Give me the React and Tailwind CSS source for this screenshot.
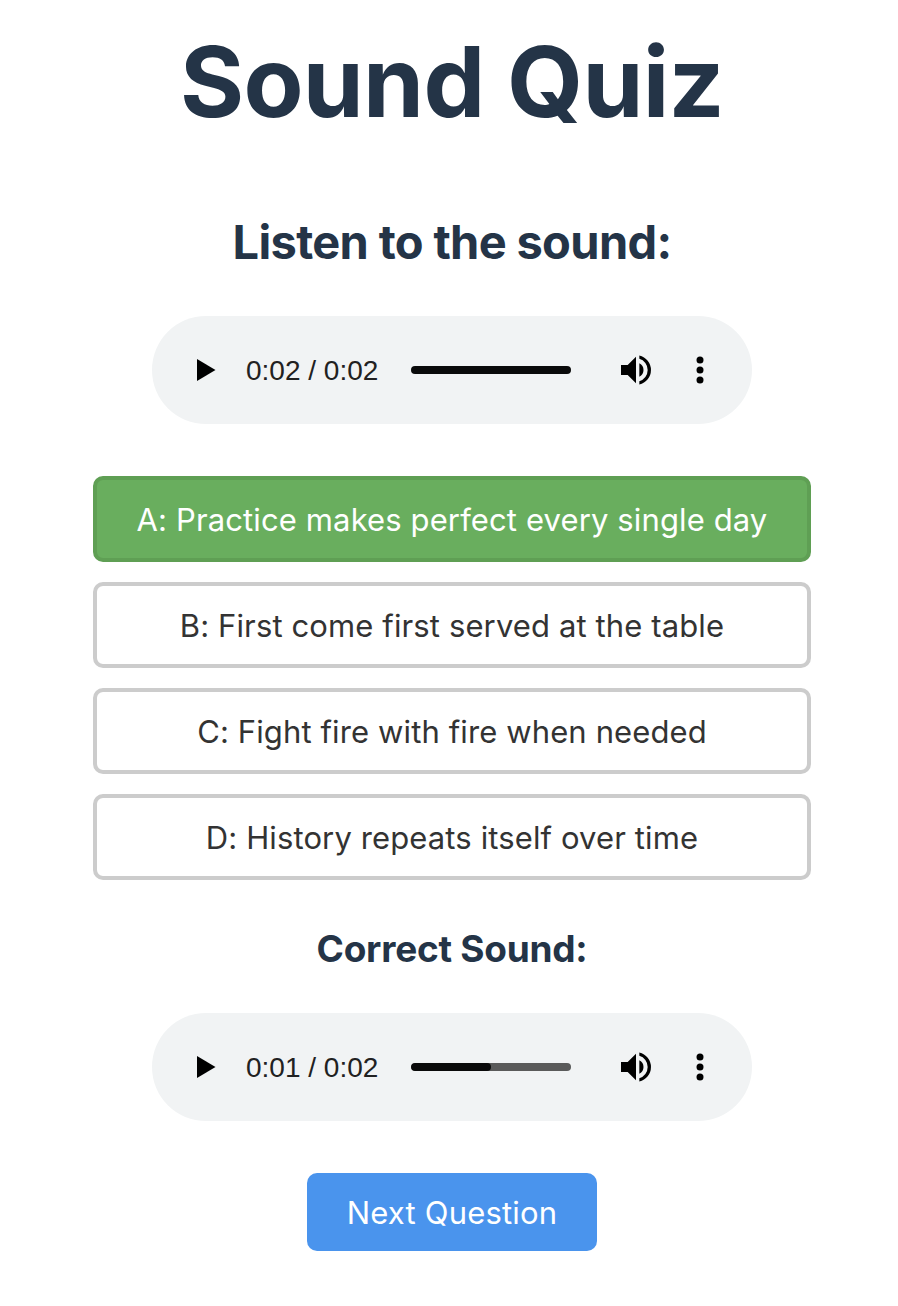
const ANSWERS = [
  { text: 'A: Practice makes perfect every single day', correct: true },
  { text: 'B: First come first served at the table' },
  { text: 'C: Fight fire with fire when needed' },
  { text: 'D: History repeats itself over time' },
];

function Player({ time, half }) {
  return (
    <div className="flex h-[108px] w-[600px] shrink-0 items-center rounded-full bg-[#f1f3f4] pl-[34px]">
      <svg className="size-10 shrink-0" viewBox="0 0 40 40"><path d="M11 9v22l18.500-11z" /></svg>
      <span className="ml-5 w-[165px] shrink-0 whitespace-nowrap pt-0.5 font-['Liberation_Sans',sans-serif] text-[28px] leading-8 text-[#212121]">{time}</span>
      <div className="h-2 w-40 shrink-0 overflow-hidden rounded-full bg-[#5a5a5a]">
        <div className={half ? 'h-2 w-1/2 rounded-full bg-[#0a0a0a]' : 'h-2 w-full bg-[#0a0a0a]'} />
      </div>
      <svg className="ml-[45px] size-10 shrink-0" viewBox="0 0 24 24"><path d="M3 9v6h4l5 5V4L7 9H3zm13.500 3A4.500 4.500 0 0 0 14 7.970v8.050A4.500 4.500 0 0 0 16.500 12zM14 3.230v2.060a7 7 0 0 1 0 13.420v2.060A9 9 0 0 0 14 3.230z" /></svg>
      <svg className="ml-[23px] size-10 shrink-0" viewBox="0 0 40 40"><circle cx="21" cy="10" r="3.500" /><circle cx="21" cy="20" r="3.500" /><circle cx="21" cy="30" r="3.500" /></svg>
    </div>
  );
}

export default function App() {
  return (
    <main className="flex h-[1306px] w-[904px] flex-col items-center bg-white font-[Inter,sans-serif] text-[#243447]">
      <h1 className="mt-[22px] h-[120px] whitespace-nowrap text-[98px] font-bold leading-[120px] tracking-[-0.700px]">Sound Quiz</h1>
      <h2 className="mt-[70px] h-[60px] whitespace-nowrap text-[47px] font-bold leading-[60px] tracking-[-0.660px]">Listen to the sound:</h2>
      <div className="mt-11"><Player time="0:02 / 0:02" /></div>
      <div className="mt-[52px] flex w-[718px] flex-col gap-5">
        {ANSWERS.map((a) => (
          <button key={a.text} className={`h-[86px] whitespace-nowrap rounded-[10px] border-4 pt-0.5 text-[31px] tracking-[0.120px] ${a.correct ? 'border-[#5f9f54] bg-[#69ae5e] text-white' : 'border-[#cccccc] bg-white text-[#333333]'}`}>{a.text}</button>
        ))}
      </div>
      <h3 className="mt-[45px] h-12 whitespace-nowrap text-[37px] font-bold leading-[48px] tracking-[-0.250px]">Correct Sound:</h3>
      <div className="mt-10"><Player time="0:01 / 0:02" half /></div>
      <button className="mt-[52px] h-[78px] w-[290px] whitespace-nowrap rounded-[10px] bg-[#4a94ed] pt-0.5 text-[31px] tracking-[0.200px] text-white">Next Question</button>
    </main>
  );
}
